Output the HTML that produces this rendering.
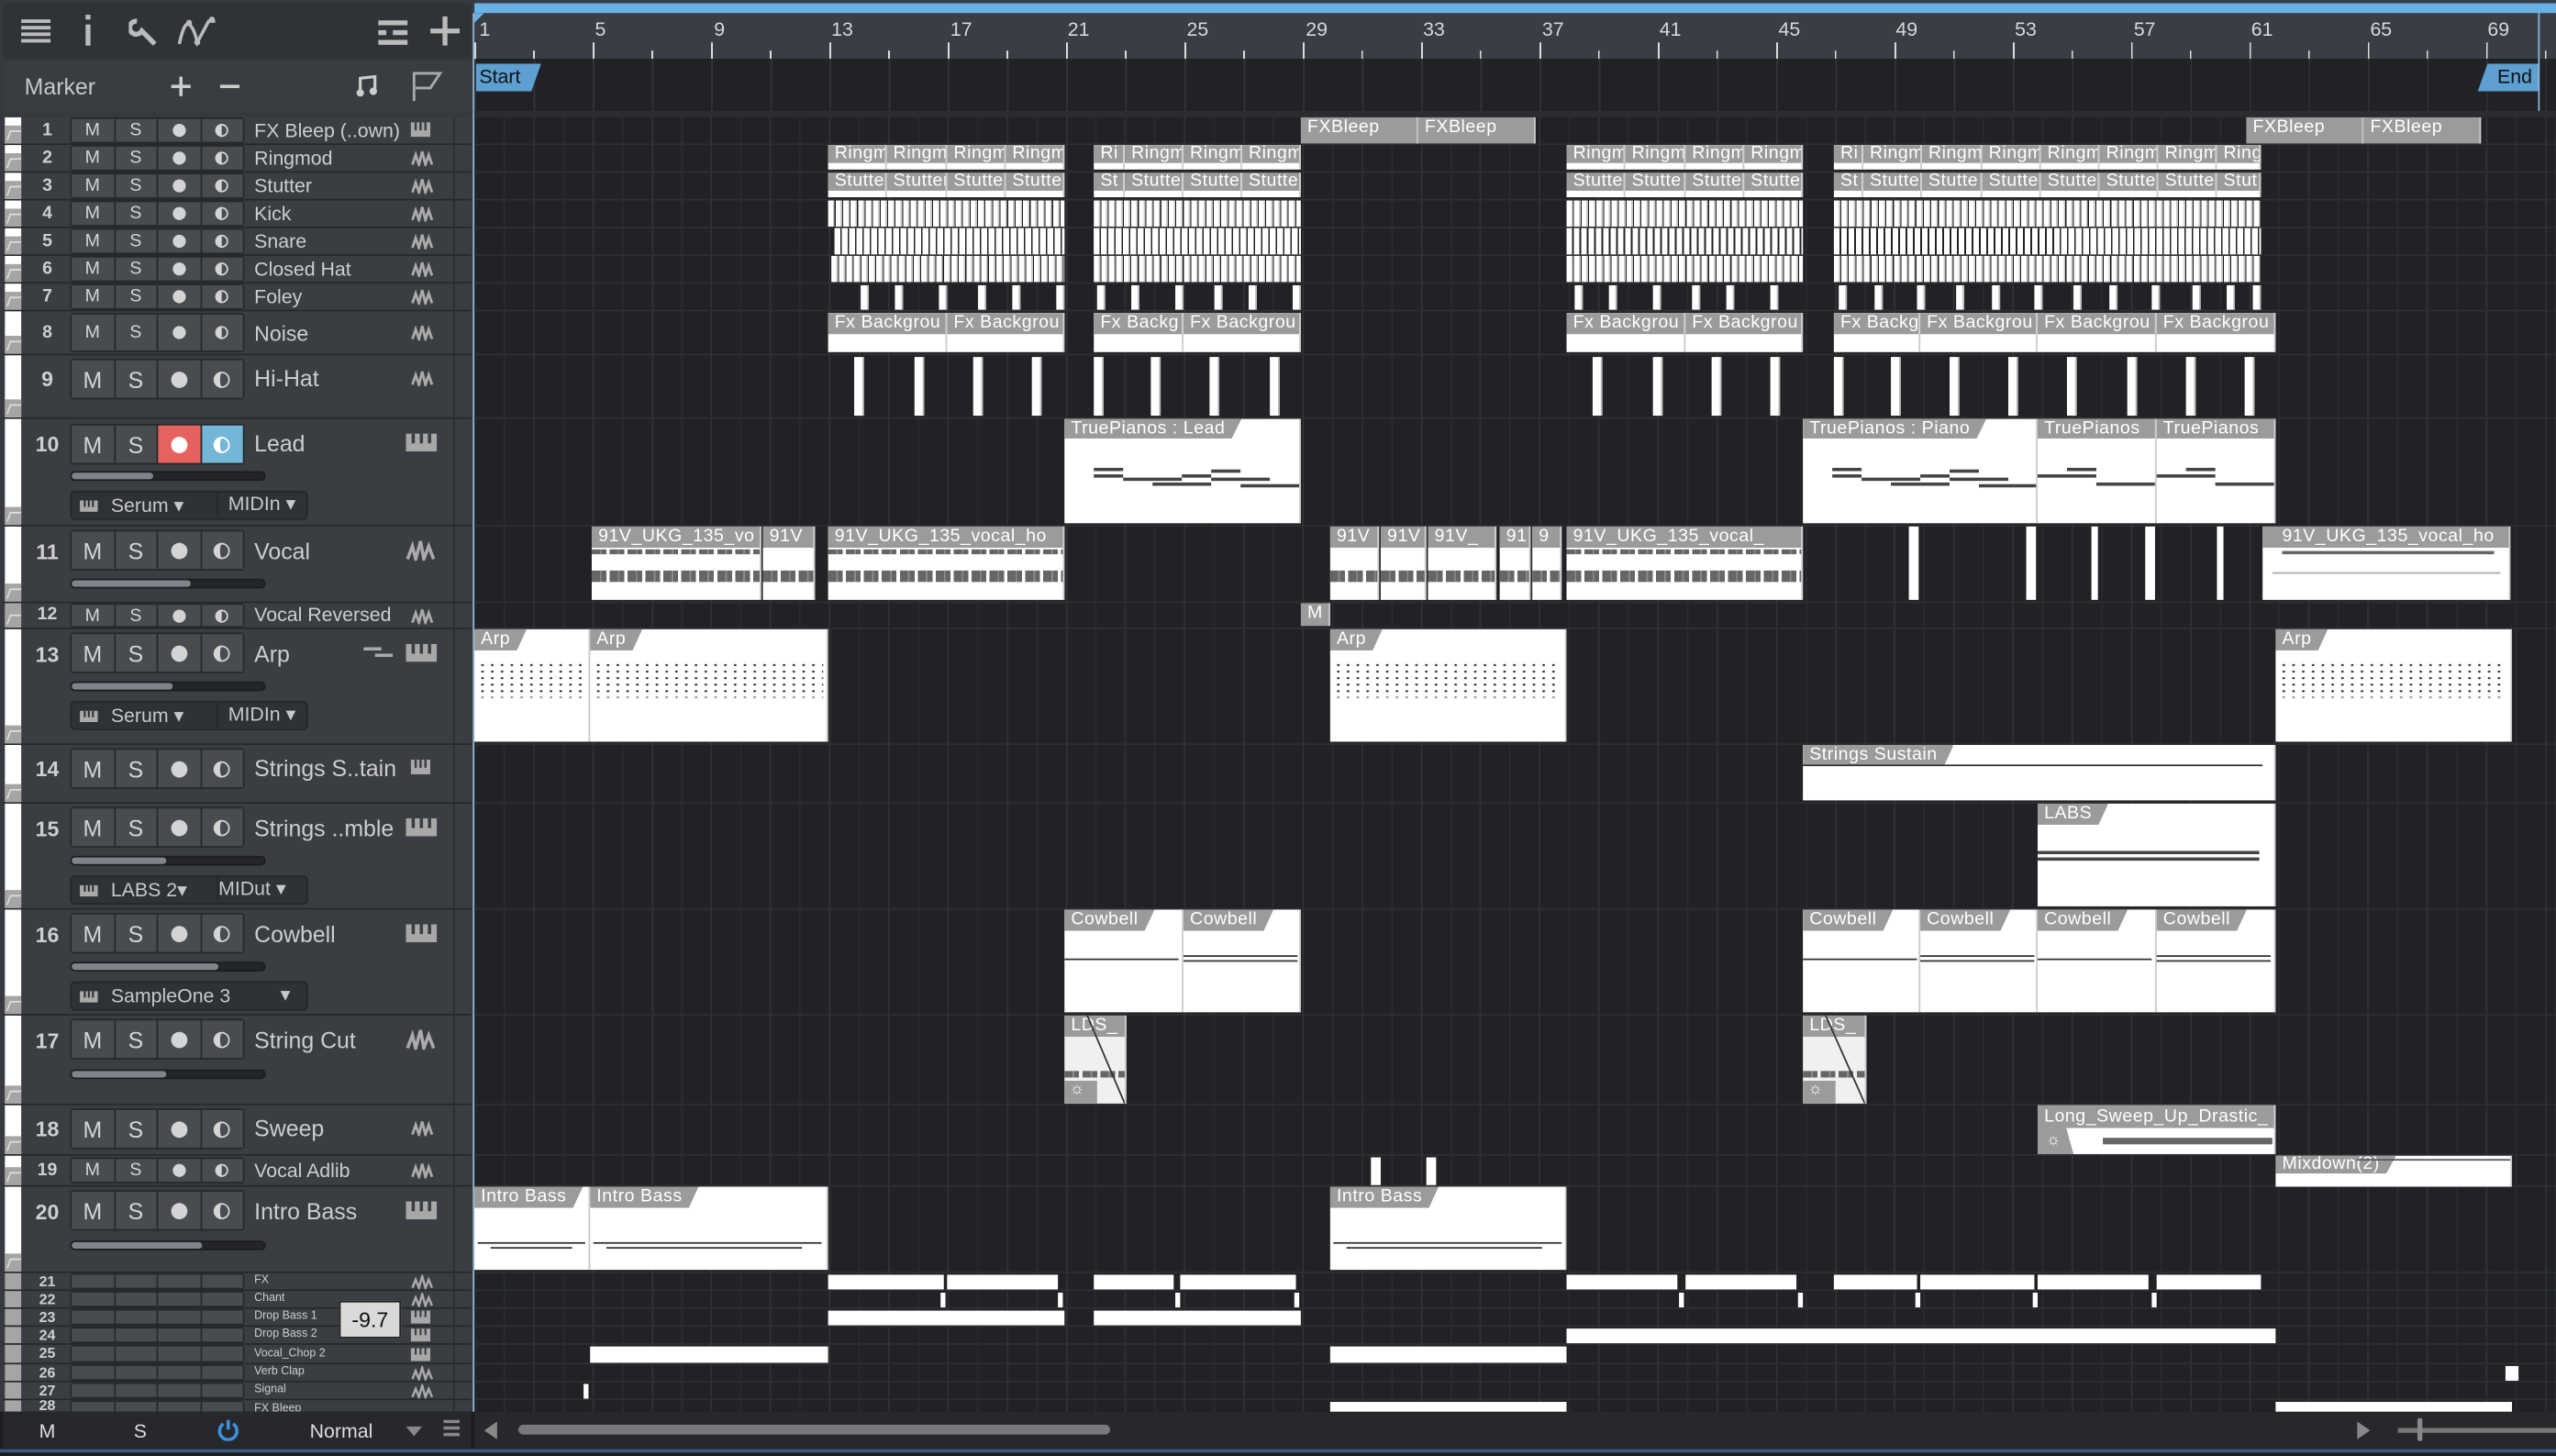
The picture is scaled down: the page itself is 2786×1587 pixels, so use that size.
<!DOCTYPE html>
<html><head><meta charset="utf-8"><style>
*{box-sizing:border-box;margin:0;padding:0}
body{width:2786px;height:1586px;overflow:hidden;background:#1c1d20;font-family:"Liberation Sans",sans-serif}
#w{position:absolute;left:0;top:0;width:1568px;height:893px;transform:scale(1.776786);transform-origin:0 0;background:#1c1d20;overflow:hidden}
.a{position:absolute}
#lp{left:0;top:0;width:291px;height:893px;background:#36393e}
#tb{left:2px;top:2px;width:287px;height:34px;background:#2f3236}
#mk{left:2px;top:38px;width:287px;height:31px;background:#393c41;color:#c8c8c8;font-size:14px}
.tr{position:absolute;left:2px;width:287px;background:#3a3d42;border-bottom:1px solid #26282b}
.au{position:absolute;left:1px;top:0;width:10px;height:100%;background:#fff}
.au i{position:absolute;left:0;bottom:0;width:10px;height:11px;background:#a5a5a5}
.au i:after{content:"";position:absolute;left:2px;top:3px;width:6px;height:5px;border-left:1px solid #ddd;border-top:1px solid #ddd;transform:skewX(-20deg)}
.n{position:absolute;left:14px;width:26px;text-align:center;color:#cfcfcf;font-weight:bold;font-size:11px}
.bt{position:absolute;left:41px;width:107px;display:flex;border:1px solid #26282b;border-radius:2px;background:#26282b}
.bt b{flex:1;background:#484b50;color:#d4d4d4;font-weight:normal;text-align:center;margin-right:1px;font-size:11px;display:flex;align-items:center;justify-content:center}
.bt b:last-child{margin-right:0}
.dot{width:8px;height:8px;border-radius:50%;background:#d4d4d4;display:block}
.mon{width:8px;height:8px;border-radius:50%;border:1.5px solid #d4d4d4;border-left:4px solid #d4d4d4;display:block}
.nm{position:absolute;left:154px;color:#cdcdcd;font-size:12px;white-space:nowrap}
.ic{position:absolute;left:250px}
.sep{position:absolute;left:276px;top:0;width:1px;height:100%;background:#2a2c2f}
.sl{position:absolute;left:41px;width:120px;height:6px;border-radius:3px;background:#232528;border:1px solid #1c1d20}
.sl i{position:absolute;left:0;top:0;height:100%;background:#80848a;border-radius:3px}
.sel{position:absolute;left:41px;width:146px;height:18px;background:#2e3135;border:1px solid #25272a;border-radius:3px;color:#c8c8c8;font-size:12px;line-height:16px}
#ar{left:291px;top:72px;width:1277px;height:794px;background-color:#202225;
background-image:repeating-linear-gradient(90deg,#303236 0 1px,transparent 1px 36.3px),repeating-linear-gradient(90deg,transparent 0 18.15px,#292b2e 18.15px 19.15px,transparent 19.15px 36.3px);background-position:-0.3px 0}
.hl{position:absolute;left:291px;width:1277px;height:1px;background:#2d2f32}
.c{position:absolute;background:#fff;overflow:hidden;border-right:1px solid #ccc}
.h{background:#9b9b9b;color:#fff;font-size:11px;height:13px;line-height:13px;padding-left:4px;white-space:nowrap;overflow:hidden;letter-spacing:.3px}
.t{display:inline-block;padding-right:10px;clip-path:polygon(0 0,100% 0,calc(100% - 6px) 100%,0 100%)}
.hh{background:transparent;padding:0}
.hh span{background:#9b9b9b;padding:0 10px 0 4px;display:inline-block;clip-path:polygon(0 0,100% 0,calc(100% - 6px) 100%,0 100%)}
.k{background:repeating-linear-gradient(90deg,#fff 0 3px,#c9c9c9 3px 4px,#1a1a1a 4px 4.6px)}
.sn{background:repeating-linear-gradient(90deg,#fff 0 3.5px,#222 3.5px 4.5px),#fff}
.fb{position:absolute;width:5px;background:#fff;border-right:1px solid #bbb}
.wv{position:absolute;left:0;right:0;height:7px;background:repeating-linear-gradient(90deg,#666 0 5px,#8a8a8a 5px 6px,#666 6px 9px,transparent 9px 11px)}
.dots{position:absolute;left:2px;right:2px;background-image:radial-gradient(#333 0.8px,transparent 1px);background-size:6px 4px}
.ml{position:absolute;height:2px;background:#444}
.rl{position:absolute;color:#d8d8d8;font-size:12px;top:11px}
.tk{position:absolute;width:1px;background:#ddd}
.wb{position:absolute;background:#fff}
</style></head><body><div id="w">

<!-- LEFT PANEL -->
<div id="lp" class="a"></div>
<div id="tb" class="a">
 <svg class="a" style="left:10px;top:9px" width="20" height="16"><path d="M1 2h18M1 6h18M1 10h18M1 14h18" stroke="#bbb" stroke-width="2.2"/></svg>
 <svg class="a" style="left:48px;top:7px" width="8" height="20"><rect x="2.5" y="0" width="3" height="3" fill="#bbb"/><rect x="2.5" y="6" width="3" height="13" fill="#bbb"/></svg>
 <svg class="a" style="left:77px;top:8px" width="20" height="20"><path d="M5 3a4 4 0 1 0 3 6l8 8" stroke="#bbb" stroke-width="3" fill="none"/></svg>
 <svg class="a" style="left:106px;top:7px" width="28" height="20"><path d="M2 18Q5 4 8 6T13 17L20 4 24 4" stroke="#bbb" stroke-width="2" fill="none"/><circle cx="8" cy="5" r="1.8" fill="#bbb"/><circle cx="13" cy="17" r="1.8" fill="#bbb"/><circle cx="22" cy="3" r="1.8" fill="#bbb"/></svg>
 <svg class="a" style="left:230px;top:10px" width="20" height="16"><path d="M0 2h18M0 8h5M9 8h9M0 14h18" stroke="#bbb" stroke-width="3"/></svg>
 <svg class="a" style="left:262px;top:8px" width="18" height="18"><path d="M9 0v18M0 9h18" stroke="#bbb" stroke-width="3"/></svg>
</div>
<div id="mk" class="a">
 <span class="a" style="left:13px;top:7px">Marker</span>
 <svg class="a" style="left:103px;top:9px" width="12" height="12"><path d="M6 0v12M0 6h12" stroke="#ccc" stroke-width="2"/></svg>
 <svg class="a" style="left:133px;top:9px" width="12" height="12"><path d="M0 6h12" stroke="#ccc" stroke-width="2"/></svg>
 <svg class="a" style="left:216px;top:8px" width="14" height="14"><path d="M3 11V2l9-1v9" stroke="#ccc" stroke-width="1.8" fill="none"/><circle cx="3" cy="11" r="2.3" fill="#ccc"/><circle cx="11" cy="10" r="2.3" fill="#ccc"/></svg>
 <svg class="a" style="left:250px;top:5px" width="20" height="20"><path d="M2 19V2h16l-6 9H3" stroke="#aaa" stroke-width="1.6" fill="none"/></svg>
</div>

<!-- track headers -->
<div class="tr" style="top:72px;height:17px"><div class="au"><i></i></div><div class="n" style="top:2px">1</div><div class="bt" style="top:0;height:16px"><b>M</b><b>S</b><b><i class="dot"></i></b><b><i class="mon"></i></b></div><div class="nm" style="top:1px">FX Bleep (..own)</div><svg class="ic" style="top:3px" width="12" height="9"><rect width="12" height="9" fill="#a8a8a8"/><path d="M3 0v5M6 0v5M9 0v5" stroke="#3a3d42" stroke-width="1.4"/></svg><div class="sep"></div></div>
<div class="tr" style="top:89px;height:17px"><div class="au"><i></i></div><div class="n" style="top:2px">2</div><div class="bt" style="top:0;height:16px"><b>M</b><b>S</b><b><i class="dot"></i></b><b><i class="mon"></i></b></div><div class="nm" style="top:1px">Ringmod</div><svg class="ic" style="top:3px" width="14" height="10"><path d="M1 9L3 3 5 9 7 1 9 9 11 3 13 9" stroke="#aaa" stroke-width="1.6" fill="none"/></svg><div class="sep"></div></div>
<div class="tr" style="top:106px;height:17px"><div class="au"><i></i></div><div class="n" style="top:2px">3</div><div class="bt" style="top:0;height:16px"><b>M</b><b>S</b><b><i class="dot"></i></b><b><i class="mon"></i></b></div><div class="nm" style="top:1px">Stutter</div><svg class="ic" style="top:3px" width="14" height="10"><path d="M1 9L3 3 5 9 7 1 9 9 11 3 13 9" stroke="#aaa" stroke-width="1.6" fill="none"/></svg><div class="sep"></div></div>
<div class="tr" style="top:123px;height:17px"><div class="au"><i></i></div><div class="n" style="top:2px">4</div><div class="bt" style="top:0;height:16px"><b>M</b><b>S</b><b><i class="dot"></i></b><b><i class="mon"></i></b></div><div class="nm" style="top:1px">Kick</div><svg class="ic" style="top:3px" width="14" height="10"><path d="M1 9L3 3 5 9 7 1 9 9 11 3 13 9" stroke="#aaa" stroke-width="1.6" fill="none"/></svg><div class="sep"></div></div>
<div class="tr" style="top:140px;height:17px"><div class="au"><i></i></div><div class="n" style="top:2px">5</div><div class="bt" style="top:0;height:16px"><b>M</b><b>S</b><b><i class="dot"></i></b><b><i class="mon"></i></b></div><div class="nm" style="top:1px">Snare</div><svg class="ic" style="top:3px" width="14" height="10"><path d="M1 9L3 3 5 9 7 1 9 9 11 3 13 9" stroke="#aaa" stroke-width="1.6" fill="none"/></svg><div class="sep"></div></div>
<div class="tr" style="top:157px;height:17px"><div class="au"><i></i></div><div class="n" style="top:2px">6</div><div class="bt" style="top:0;height:16px"><b>M</b><b>S</b><b><i class="dot"></i></b><b><i class="mon"></i></b></div><div class="nm" style="top:1px">Closed Hat</div><svg class="ic" style="top:3px" width="14" height="10"><path d="M1 9L3 3 5 9 7 1 9 9 11 3 13 9" stroke="#aaa" stroke-width="1.6" fill="none"/></svg><div class="sep"></div></div>
<div class="tr" style="top:174px;height:17px"><div class="au"><i></i></div><div class="n" style="top:2px">7</div><div class="bt" style="top:0;height:16px"><b>M</b><b>S</b><b><i class="dot"></i></b><b><i class="mon"></i></b></div><div class="nm" style="top:1px">Foley</div><svg class="ic" style="top:3px" width="14" height="10"><path d="M1 9L3 3 5 9 7 1 9 9 11 3 13 9" stroke="#aaa" stroke-width="1.6" fill="none"/></svg><div class="sep"></div></div>
<div class="tr" style="top:191px;height:27px"><div class="au"><i></i></div><div class="n" style="top:7px">8</div><div class="bt" style="top:1px;height:24px"><b>M</b><b>S</b><b><i class="dot"></i></b><b><i class="mon"></i></b></div><div class="nm" style="top:6px;font-size:13px">Noise</div><svg class="ic" style="top:8px" width="14" height="10"><path d="M1 9L3 3 5 9 7 1 9 9 11 3 13 9" stroke="#aaa" stroke-width="1.6" fill="none"/></svg><div class="sep"></div></div>
<div class="tr" style="top:218px;height:39px"><div class="au"><i></i></div><div class="n" style="top:7px;font-size:13px">9</div><div class="bt" style="top:2px;height:25px"><b style="font-size:14px">M</b><b style="font-size:14px">S</b><b><i class="dot" style="width:10px;height:10px"></i></b><b><i class="mon" style="width:10px;height:10px"></i></b></div><div class="nm" style="top:6px;font-size:14px">Hi-Hat</div><svg class="ic" style="top:9px" width="14" height="10"><path d="M1 9L3 3 5 9 7 1 9 9 11 3 13 9" stroke="#aaa" stroke-width="1.6" fill="none"/></svg><div class="sep"></div></div>
<div class="tr" style="top:257px;height:66px"><div class="au"><i></i></div><div class="n" style="top:8px;font-size:13px">10</div><div class="bt" style="top:3px;height:25px"><b style="font-size:14px">M</b><b style="font-size:14px">S</b><b style="background:#e6625e"><i class="dot" style="width:10px;height:10px;background:#fff"></i></b><b style="background:#74b6d6"><i class="mon" style="width:10px;height:10px;border-color:#fff"></i></b></div><div class="nm" style="top:7px;font-size:14px">Lead</div><svg class="ic" style="top:9px;left:247px" width="19" height="11"><rect width="19" height="11" fill="#a8a8a8"/><path d="M4.5 0v6M9.5 0v6M14.5 0v6" stroke="#3a3d42" stroke-width="2"/></svg><div class="sl" style="top:32px"><i style="width:50px"></i></div><div class="sel" style="top:44px"><svg class="a" style="left:5px;top:5px" width="11" height="7"><rect width="11" height="7" fill="#aaa"/><path d="M3 0v4M5.5 0v4M8 0v4" stroke="#2e3135" stroke-width="1.2"/></svg><span class="a" style="left:24px">Serum ▾</span><span class="a" style="left:89px;border-left:1px solid #25272a;padding-left:6px;top:-1px">MIDIn ▾</span></div><div class="sep"></div></div>
<div class="tr" style="top:323px;height:47px"><div class="au"><i></i></div><div class="n" style="top:8px;font-size:13px">11</div><div class="bt" style="top:2px;height:25px"><b style="font-size:14px">M</b><b style="font-size:14px">S</b><b><i class="dot" style="width:10px;height:10px"></i></b><b><i class="mon" style="width:10px;height:10px"></i></b></div><div class="nm" style="top:7px;font-size:14px">Vocal</div><svg class="ic" style="top:8px;left:247px" width="18" height="13"><path d="M1 12L4 4 6 12 9 1 11 12 14 4 17 12" stroke="#aaa" stroke-width="2" fill="none"/></svg><div class="sl" style="top:32px"><i style="width:73px"></i></div><div class="sep"></div></div>
<div class="tr" style="top:370px;height:16px"><div class="au" style="background:#a5a5a5"><i></i></div><div class="n" style="top:1px">12</div><div class="bt" style="top:0;height:15px"><b>M</b><b>S</b><b><i class="dot"></i></b><b><i class="mon"></i></b></div><div class="nm" style="top:0">Vocal Reversed</div><svg class="ic" style="top:3px" width="14" height="10"><path d="M1 9L3 3 5 9 7 1 9 9 11 3 13 9" stroke="#aaa" stroke-width="1.6" fill="none"/></svg><div class="sep"></div></div>
<div class="tr" style="top:386px;height:71px"><div class="au"><i></i></div><div class="n" style="top:8px;font-size:13px">13</div><div class="bt" style="top:2px;height:25px"><b style="font-size:14px">M</b><b style="font-size:14px">S</b><b><i class="dot" style="width:10px;height:10px"></i></b><b><i class="mon" style="width:10px;height:10px"></i></b></div><div class="nm" style="top:7px;font-size:14px">Arp</div><svg class="a" style="left:221px;top:11px" width="18" height="7"><path d="M0 1h11M7 5h11" stroke="#aaa" stroke-width="2"/></svg><svg class="ic" style="top:9px;left:247px" width="19" height="11"><rect width="19" height="11" fill="#a8a8a8"/><path d="M4.5 0v6M9.5 0v6M14.5 0v6" stroke="#3a3d42" stroke-width="2"/></svg><div class="sl" style="top:32px"><i style="width:62px"></i></div><div class="sel" style="top:44px"><svg class="a" style="left:5px;top:5px" width="11" height="7"><rect width="11" height="7" fill="#aaa"/><path d="M3 0v4M5.5 0v4M8 0v4" stroke="#2e3135" stroke-width="1.2"/></svg><span class="a" style="left:24px">Serum ▾</span><span class="a" style="left:89px;border-left:1px solid #25272a;padding-left:6px;top:-1px">MIDIn ▾</span></div><div class="sep"></div></div>
<div class="tr" style="top:457px;height:36px"><div class="au"><i></i></div><div class="n" style="top:7px;font-size:13px">14</div><div class="bt" style="top:2px;height:25px"><b style="font-size:14px">M</b><b style="font-size:14px">S</b><b><i class="dot" style="width:10px;height:10px"></i></b><b><i class="mon" style="width:10px;height:10px"></i></b></div><div class="nm" style="top:6px;font-size:14px">Strings S..tain</div><svg class="ic" style="top:9px" width="12" height="9"><rect width="12" height="9" fill="#a8a8a8"/><path d="M3 0v5M6 0v5M9 0v5" stroke="#3a3d42" stroke-width="1.4"/></svg><div class="sep"></div></div>
<div class="tr" style="top:493px;height:65px"><div class="au"><i></i></div><div class="n" style="top:8px;font-size:13px">15</div><div class="bt" style="top:2px;height:25px"><b style="font-size:14px">M</b><b style="font-size:14px">S</b><b><i class="dot" style="width:10px;height:10px"></i></b><b><i class="mon" style="width:10px;height:10px"></i></b></div><div class="nm" style="top:7px;font-size:14px">Strings ..mble</div><svg class="ic" style="top:9px;left:247px" width="19" height="11"><rect width="19" height="11" fill="#a8a8a8"/><path d="M4.5 0v6M9.5 0v6M14.5 0v6" stroke="#3a3d42" stroke-width="2"/></svg><div class="sl" style="top:32px"><i style="width:58px"></i></div><div class="sel" style="top:44px"><svg class="a" style="left:5px;top:5px" width="11" height="7"><rect width="11" height="7" fill="#aaa"/><path d="M3 0v4M5.5 0v4M8 0v4" stroke="#2e3135" stroke-width="1.2"/></svg><span class="a" style="left:24px">LABS 2▾</span><span class="a" style="left:89px;border-left:1px solid #25272a;padding-left:0;top:-1px">MIDut ▾</span></div><div class="sep"></div></div>
<div class="tr" style="top:558px;height:65px"><div class="au"><i></i></div><div class="n" style="top:8px;font-size:13px">16</div><div class="bt" style="top:2px;height:25px"><b style="font-size:14px">M</b><b style="font-size:14px">S</b><b><i class="dot" style="width:10px;height:10px"></i></b><b><i class="mon" style="width:10px;height:10px"></i></b></div><div class="nm" style="top:7px;font-size:14px">Cowbell</div><svg class="ic" style="top:9px;left:247px" width="19" height="11"><rect width="19" height="11" fill="#a8a8a8"/><path d="M4.5 0v6M9.5 0v6M14.5 0v6" stroke="#3a3d42" stroke-width="2"/></svg><div class="sl" style="top:32px"><i style="width:90px"></i></div><div class="sel" style="top:44px"><svg class="a" style="left:5px;top:5px" width="11" height="7"><rect width="11" height="7" fill="#aaa"/><path d="M3 0v4M5.5 0v4M8 0v4" stroke="#2e3135" stroke-width="1.2"/></svg><span class="a" style="left:24px">SampleOne 3</span><span class="a" style="left:128px;top:-1px">▾</span></div><div class="sep"></div></div>
<div class="tr" style="top:623px;height:55px"><div class="au"><i></i></div><div class="n" style="top:8px;font-size:13px">17</div><div class="bt" style="top:2px;height:25px"><b style="font-size:14px">M</b><b style="font-size:14px">S</b><b><i class="dot" style="width:10px;height:10px"></i></b><b><i class="mon" style="width:10px;height:10px"></i></b></div><div class="nm" style="top:7px;font-size:14px">String Cut</div><svg class="ic" style="top:8px;left:247px" width="18" height="13"><path d="M1 12L4 4 6 12 9 1 11 12 14 4 17 12" stroke="#aaa" stroke-width="2" fill="none"/></svg><div class="sl" style="top:33px"><i style="width:58px"></i></div><div class="sep"></div></div>
<div class="tr" style="top:678px;height:31px"><div class="au"><i></i></div><div class="n" style="top:7px;font-size:13px">18</div><div class="bt" style="top:2px;height:25px"><b style="font-size:14px">M</b><b style="font-size:14px">S</b><b><i class="dot" style="width:10px;height:10px"></i></b><b><i class="mon" style="width:10px;height:10px"></i></b></div><div class="nm" style="top:6px;font-size:14px">Sweep</div><svg class="ic" style="top:9px" width="14" height="10"><path d="M1 9L3 3 5 9 7 1 9 9 11 3 13 9" stroke="#aaa" stroke-width="1.6" fill="none"/></svg><div class="sep"></div></div>
<div class="tr" style="top:709px;height:19px"><div class="au"><i></i></div><div class="n" style="top:3px">19</div><div class="bt" style="top:1px;height:16px"><b>M</b><b>S</b><b><i class="dot"></i></b><b><i class="mon"></i></b></div><div class="nm" style="top:2px">Vocal Adlib</div><svg class="ic" style="top:4px" width="14" height="10"><path d="M1 9L3 3 5 9 7 1 9 9 11 3 13 9" stroke="#aaa" stroke-width="1.6" fill="none"/></svg><div class="sep"></div></div>
<div class="tr" style="top:728px;height:53px"><div class="au"><i></i></div><div class="n" style="top:8px;font-size:13px">20</div><div class="bt" style="top:2px;height:25px"><b style="font-size:14px">M</b><b style="font-size:14px">S</b><b><i class="dot" style="width:10px;height:10px"></i></b><b><i class="mon" style="width:10px;height:10px"></i></b></div><div class="nm" style="top:7px;font-size:14px">Intro Bass</div><svg class="ic" style="top:9px;left:247px" width="19" height="11"><rect width="19" height="11" fill="#a8a8a8"/><path d="M4.5 0v6M9.5 0v6M14.5 0v6" stroke="#3a3d42" stroke-width="2"/></svg><div class="sl" style="top:33px"><i style="width:80px"></i></div><div class="sep"></div></div>

<div class="tr" style="top:781px;height:11px"><div class="au" style="background:#a5a5a5"></div><div class="n" style="top:0;font-size:9px">21</div><div class="bt" style="top:0;height:10px"><b></b><b></b><b></b><b></b></div><div class="nm" style="top:1px;font-size:7px">FX</div><svg class="ic" style="top:1px" width="14" height="9"><path d="M1 8L3 3 5 8 7 1 9 8 11 3 13 8" stroke="#aaa" stroke-width="1.4" fill="none"/></svg><div class="sep"></div></div>
<div class="tr" style="top:792px;height:11px"><div class="au" style="background:#a5a5a5"></div><div class="n" style="top:0;font-size:9px">22</div><div class="bt" style="top:0;height:10px"><b></b><b></b><b></b><b></b></div><div class="nm" style="top:1px;font-size:7px">Chant</div><svg class="ic" style="top:1px" width="14" height="9"><path d="M1 8L3 3 5 8 7 1 9 8 11 3 13 8" stroke="#aaa" stroke-width="1.4" fill="none"/></svg><div class="sep"></div></div>
<div class="tr" style="top:803px;height:11px"><div class="au" style="background:#a5a5a5"></div><div class="n" style="top:0;font-size:9px">23</div><div class="bt" style="top:0;height:10px"><b></b><b></b><b></b><b></b></div><div class="nm" style="top:1px;font-size:7px">Drop Bass 1</div><svg class="ic" style="top:1px" width="12" height="8"><rect width="12" height="8" fill="#a8a8a8"/><path d="M3 0v4M6 0v4M9 0v4" stroke="#3a3d42" stroke-width="1.2"/></svg><div class="sep"></div></div>
<div class="tr" style="top:814px;height:11px"><div class="au" style="background:#a5a5a5"></div><div class="n" style="top:0;font-size:9px">24</div><div class="bt" style="top:0;height:10px"><b></b><b></b><b></b><b></b></div><div class="nm" style="top:1px;font-size:7px">Drop Bass 2</div><svg class="ic" style="top:1px" width="12" height="8"><rect width="12" height="8" fill="#a8a8a8"/><path d="M3 0v4M6 0v4M9 0v4" stroke="#3a3d42" stroke-width="1.2"/></svg><div class="sep"></div></div>
<div class="tr" style="top:825px;height:12px"><div class="au" style="background:#a5a5a5"></div><div class="n" style="top:0;font-size:9px">25</div><div class="bt" style="top:0;height:11px"><b></b><b></b><b></b><b></b></div><div class="nm" style="top:2px;font-size:7px">Vocal_Chop 2</div><svg class="ic" style="top:2px" width="12" height="8"><rect width="12" height="8" fill="#a8a8a8"/><path d="M3 0v4M6 0v4M9 0v4" stroke="#3a3d42" stroke-width="1.2"/></svg><div class="sep"></div></div>
<div class="tr" style="top:837px;height:11px"><div class="au" style="background:#a5a5a5"></div><div class="n" style="top:0;font-size:9px">26</div><div class="bt" style="top:0;height:10px"><b></b><b></b><b></b><b></b></div><div class="nm" style="top:1px;font-size:7px">Verb Clap</div><svg class="ic" style="top:1px" width="14" height="9"><path d="M1 8L3 3 5 8 7 1 9 8 11 3 13 8" stroke="#aaa" stroke-width="1.4" fill="none"/></svg><div class="sep"></div></div>
<div class="tr" style="top:848px;height:11px"><div class="au" style="background:#a5a5a5"></div><div class="n" style="top:0;font-size:9px">27</div><div class="bt" style="top:0;height:10px"><b></b><b></b><b></b><b></b></div><div class="nm" style="top:1px;font-size:7px">Signal</div><svg class="ic" style="top:1px" width="14" height="9"><path d="M1 8L3 3 5 8 7 1 9 8 11 3 13 8" stroke="#aaa" stroke-width="1.4" fill="none"/></svg><div class="sep"></div></div>
<div class="tr" style="top:859px;height:8px;overflow:hidden"><div class="au" style="background:#a5a5a5"></div><div class="n" style="top:-2px;font-size:9px">28</div><div class="bt" style="top:0;height:10px"><b></b><b></b><b></b><b></b></div><div class="nm" style="top:2px;font-size:7px">FX Bleep</div><div class="sep"></div></div>
<div class="a" style="left:208px;top:798px;width:38px;height:23px;background:#d9d9d9;border:1px solid #222;color:#111;font-size:13px;text-align:center;line-height:21px">-9.7</div>

<!-- bottom bar -->
<div class="a" style="left:0;top:866px;width:1568px;height:27px;background:#1c1d20"></div>
<div class="a" style="left:2px;top:866px;width:287px;height:23px;background:#26282b;color:#ddd;font-size:12px">
 <span class="a" style="left:22px;top:5px">M</span><span class="a" style="left:80px;top:5px">S</span>
 <svg class="a" style="left:131px;top:4px" width="14" height="14"><path d="M4 3.5A5.3 5.3 0 1 0 10 3.5" stroke="#3d8fe0" stroke-width="2" fill="none"/><path d="M7 1v6" stroke="#3d8fe0" stroke-width="2"/></svg>
 <span class="a" style="left:188px;top:5px">Normal</span>
 <svg class="a" style="left:247px;top:9px" width="10" height="6"><path d="M0 0h10L5 6z" fill="#888"/></svg>
 <svg class="a" style="left:270px;top:5px" width="10" height="11"><path d="M0 1h10M0 5h10M0 9h10" stroke="#888" stroke-width="2"/></svg>
</div>
<div class="a" style="left:291px;top:866px;width:1277px;height:23px;background:#26282b">
 <svg class="a" style="left:6px;top:6px" width="8" height="11"><path d="M8 0v11L0 5.5z" fill="#888"/></svg>
 <div class="a" style="left:27px;top:8px;width:363px;height:6px;border-radius:3px;background:#77797d"></div>
 <svg class="a" style="left:1155px;top:6px" width="8" height="11"><path d="M0 0v11L8 5.5z" fill="#888"/></svg>
 <div class="a" style="left:1180px;top:10px;width:97px;height:3px;background:#777"></div>
 <div class="a" style="left:1192px;top:4px;width:3px;height:14px;background:#888;border-radius:1px"></div>
</div>
<div class="a" style="left:0;top:889px;width:1568px;height:2px;background:#3c5a80"></div>

<!-- RULER -->
<div class="a" style="left:291px;top:0;width:1277px;height:38px;background:#383d46"></div>
<div class="a" style="left:291px;top:2px;width:1277px;height:6px;background:#6ab2e6"></div>
<div class="a" style="left:291px;top:8px;width:6px;height:6px;background:#6ab2e6;clip-path:polygon(0 0,100% 0,0 100%)"></div>
<div class="a" style="left:291px;top:36px;width:1277px;height:34px;background:#202225;background-image:repeating-linear-gradient(90deg,#303236 0 1px,transparent 1px 36.3px)"></div>
<div class="a" style="left:291px;top:68px;width:1277px;height:4px;background:#2a2c30"></div>
<div class="a" style="left:291px;top:26px;width:1277px;height:10px;background-image:repeating-linear-gradient(90deg,#dcdcdc 0 1px,transparent 1px 72.6px)"></div>
<div class="a" style="left:327px;top:31px;width:1240px;height:5px;background-image:repeating-linear-gradient(90deg,#dcdcdc 0 1px,transparent 1px 72.6px)"></div>
<span class="rl" style="left:294px">1</span><span class="rl" style="left:365px">5</span><span class="rl" style="left:438px">9</span><span class="rl" style="left:510px">13</span><span class="rl" style="left:583px">17</span><span class="rl" style="left:655px">21</span><span class="rl" style="left:728px">25</span><span class="rl" style="left:801px">29</span><span class="rl" style="left:873px">33</span><span class="rl" style="left:946px">37</span><span class="rl" style="left:1018px">41</span><span class="rl" style="left:1091px">45</span><span class="rl" style="left:1163px">49</span><span class="rl" style="left:1236px">53</span><span class="rl" style="left:1309px">57</span><span class="rl" style="left:1381px">61</span><span class="rl" style="left:1454px">65</span><span class="rl" style="left:1526px">69</span>
<div class="a" style="left:292px;top:39px;width:40px;height:17px;background:#5d9fd0;clip-path:polygon(0 0,100% 0,calc(100% - 6px) 100%,0 100%);color:#111;font-size:12px;line-height:17px;padding-left:2px">Start</div>
<div class="a" style="left:1520px;top:39px;width:38px;height:17px;background:#5d9fd0;clip-path:polygon(6px 0,100% 0,100% 100%,0 100%);color:#111;font-size:12px;line-height:17px;padding-left:12px">End</div>
<div class="a" style="left:290px;top:8px;width:1px;height:858px;background:#8fb6d4"></div>
<div class="a" style="left:1557px;top:8px;width:1px;height:60px;background:#8fb6d4"></div>

<!-- ARRANGE -->
<div id="ar" class="a"></div>
<div class="hl" style="top:88px"></div><div class="hl" style="top:105px"></div><div class="hl" style="top:122px"></div><div class="hl" style="top:139px"></div><div class="hl" style="top:156px"></div><div class="hl" style="top:173px"></div><div class="hl" style="top:190px"></div><div class="hl" style="top:217px"></div><div class="hl" style="top:256px"></div><div class="hl" style="top:322px"></div><div class="hl" style="top:369px"></div><div class="hl" style="top:385px"></div><div class="hl" style="top:456px"></div><div class="hl" style="top:492px"></div><div class="hl" style="top:557px"></div><div class="hl" style="top:622px"></div><div class="hl" style="top:677px"></div><div class="hl" style="top:708px"></div><div class="hl" style="top:727px"></div><div class="hl" style="top:780px"></div><div class="hl" style="top:791px"></div><div class="hl" style="top:802px"></div><div class="hl" style="top:813px"></div><div class="hl" style="top:824px"></div><div class="hl" style="top:836px"></div><div class="hl" style="top:847px"></div><div class="hl" style="top:858px"></div>

<!-- row1 FXBleep -->
<div class="c" style="left:798px;top:72px;width:72px;height:16px;background:#9b9b9b"><div class="h" style="height:12px;line-height:12px">FXBleep</div></div>
<div class="c" style="left:870px;top:72px;width:72px;height:16px;background:#9b9b9b"><div class="h" style="height:12px;line-height:12px">FXBleep</div></div>
<div class="c" style="left:1378px;top:72px;width:72px;height:16px;background:#9b9b9b"><div class="h" style="height:12px;line-height:12px">FXBleep</div></div>
<div class="c" style="left:1450px;top:72px;width:72px;height:16px;background:#9b9b9b"><div class="h" style="height:12px;line-height:12px">FXBleep</div></div>

<!-- row2 Ringmod / row3 Stutter -->
<div class="c" style="left:508px;top:89px;width:36px;height:15px"><div class="h" style="height:11px;line-height:11px">Ringm</div></div><div class="c" style="left:544px;top:89px;width:37px;height:15px"><div class="h" style="height:11px;line-height:11px">Ringm</div></div><div class="c" style="left:581px;top:89px;width:36px;height:15px"><div class="h" style="height:11px;line-height:11px">Ringm</div></div><div class="c" style="left:617px;top:89px;width:36px;height:15px"><div class="h" style="height:11px;line-height:11px">Ringm</div></div>
<div class="c" style="left:671px;top:89px;width:19px;height:15px"><div class="h" style="height:11px;line-height:11px">Ri</div></div><div class="c" style="left:690px;top:89px;width:36px;height:15px"><div class="h" style="height:11px;line-height:11px">Ringm</div></div><div class="c" style="left:726px;top:89px;width:36px;height:15px"><div class="h" style="height:11px;line-height:11px">Ringm</div></div><div class="c" style="left:762px;top:89px;width:36px;height:15px"><div class="h" style="height:11px;line-height:11px">Ringm</div></div>
<div class="c" style="left:961px;top:89px;width:36px;height:15px"><div class="h" style="height:11px;line-height:11px">Ringm</div></div><div class="c" style="left:997px;top:89px;width:37px;height:15px"><div class="h" style="height:11px;line-height:11px">Ringm</div></div><div class="c" style="left:1034px;top:89px;width:36px;height:15px"><div class="h" style="height:11px;line-height:11px">Ringm</div></div><div class="c" style="left:1070px;top:89px;width:36px;height:15px"><div class="h" style="height:11px;line-height:11px">Ringm</div></div>
<div class="c" style="left:1125px;top:89px;width:18px;height:15px"><div class="h" style="height:11px;line-height:11px">Ri</div></div><div class="c" style="left:1143px;top:89px;width:36px;height:15px"><div class="h" style="height:11px;line-height:11px">Ringm</div></div><div class="c" style="left:1179px;top:89px;width:37px;height:15px"><div class="h" style="height:11px;line-height:11px">Ringm</div></div><div class="c" style="left:1216px;top:89px;width:36px;height:15px"><div class="h" style="height:11px;line-height:11px">Ringm</div></div><div class="c" style="left:1252px;top:89px;width:36px;height:15px"><div class="h" style="height:11px;line-height:11px">Ringm</div></div><div class="c" style="left:1288px;top:89px;width:36px;height:15px"><div class="h" style="height:11px;line-height:11px">Ringm</div></div><div class="c" style="left:1324px;top:89px;width:36px;height:15px"><div class="h" style="height:11px;line-height:11px">Ringm</div></div><div class="c" style="left:1360px;top:89px;width:27px;height:15px"><div class="h" style="height:11px;line-height:11px">Ring</div></div>

<div class="c" style="left:508px;top:106px;width:36px;height:15px"><div class="h" style="height:11px;line-height:11px">Stutte</div></div><div class="c" style="left:544px;top:106px;width:37px;height:15px"><div class="h" style="height:11px;line-height:11px">Stutter</div></div><div class="c" style="left:581px;top:106px;width:36px;height:15px"><div class="h" style="height:11px;line-height:11px">Stutte</div></div><div class="c" style="left:617px;top:106px;width:36px;height:15px"><div class="h" style="height:11px;line-height:11px">Stutte</div></div>
<div class="c" style="left:671px;top:106px;width:19px;height:15px"><div class="h" style="height:11px;line-height:11px">St</div></div><div class="c" style="left:690px;top:106px;width:36px;height:15px"><div class="h" style="height:11px;line-height:11px">Stutte</div></div><div class="c" style="left:726px;top:106px;width:36px;height:15px"><div class="h" style="height:11px;line-height:11px">Stutter</div></div><div class="c" style="left:762px;top:106px;width:36px;height:15px"><div class="h" style="height:11px;line-height:11px">Stutte</div></div>
<div class="c" style="left:961px;top:106px;width:36px;height:15px"><div class="h" style="height:11px;line-height:11px">Stutte</div></div><div class="c" style="left:997px;top:106px;width:37px;height:15px"><div class="h" style="height:11px;line-height:11px">Stutte</div></div><div class="c" style="left:1034px;top:106px;width:36px;height:15px"><div class="h" style="height:11px;line-height:11px">Stutte</div></div><div class="c" style="left:1070px;top:106px;width:36px;height:15px"><div class="h" style="height:11px;line-height:11px">Stutte</div></div>
<div class="c" style="left:1125px;top:106px;width:18px;height:15px"><div class="h" style="height:11px;line-height:11px">St</div></div><div class="c" style="left:1143px;top:106px;width:36px;height:15px"><div class="h" style="height:11px;line-height:11px">Stutte</div></div><div class="c" style="left:1179px;top:106px;width:37px;height:15px"><div class="h" style="height:11px;line-height:11px">Stutte</div></div><div class="c" style="left:1216px;top:106px;width:36px;height:15px"><div class="h" style="height:11px;line-height:11px">Stutte</div></div><div class="c" style="left:1252px;top:106px;width:36px;height:15px"><div class="h" style="height:11px;line-height:11px">Stutte</div></div><div class="c" style="left:1288px;top:106px;width:36px;height:15px"><div class="h" style="height:11px;line-height:11px">Stutte</div></div><div class="c" style="left:1324px;top:106px;width:36px;height:15px"><div class="h" style="height:11px;line-height:11px">Stutte</div></div><div class="c" style="left:1360px;top:106px;width:27px;height:15px"><div class="h" style="height:11px;line-height:11px">Stut</div></div>

<!-- rows 4-6 drum patterns -->
<div class="a k" style="left:508px;top:123px;width:145px;height:16px"></div><div class="a k" style="left:671px;top:123px;width:127px;height:16px"></div><div class="a k" style="left:961px;top:123px;width:145px;height:16px"></div><div class="a k" style="left:1125px;top:123px;width:262px;height:16px"></div>
<div class="a sn" style="left:512px;top:140px;width:141px;height:16px"></div><div class="a sn" style="left:671px;top:140px;width:127px;height:16px"></div><div class="a sn" style="left:961px;top:140px;width:145px;height:16px"></div><div class="a sn" style="left:1125px;top:140px;width:262px;height:16px"></div>
<div class="a k" style="left:510px;top:157px;width:143px;height:16px"></div><div class="a k" style="left:671px;top:157px;width:127px;height:16px"></div><div class="a k" style="left:961px;top:157px;width:145px;height:16px"></div><div class="a k" style="left:1125px;top:157px;width:262px;height:16px"></div>
<!-- row7 foley -->
<div class="fb" style="left:528px;top:175px;height:15px"></div><div class="fb" style="left:549px;top:175px;height:15px"></div><div class="fb" style="left:576px;top:175px;height:15px"></div><div class="fb" style="left:600px;top:175px;height:15px"></div><div class="fb" style="left:621px;top:175px;height:15px"></div><div class="fb" style="left:648px;top:175px;height:15px"></div>
<div class="fb" style="left:673px;top:175px;height:15px"></div><div class="fb" style="left:694px;top:175px;height:15px"></div><div class="fb" style="left:721px;top:175px;height:15px"></div><div class="fb" style="left:745px;top:175px;height:15px"></div><div class="fb" style="left:766px;top:175px;height:15px"></div><div class="fb" style="left:793px;top:175px;height:15px"></div>
<div class="fb" style="left:966px;top:175px;height:15px"></div><div class="fb" style="left:987px;top:175px;height:15px"></div><div class="fb" style="left:1014px;top:175px;height:15px"></div><div class="fb" style="left:1038px;top:175px;height:15px"></div><div class="fb" style="left:1059px;top:175px;height:15px"></div><div class="fb" style="left:1086px;top:175px;height:15px"></div>
<div class="fb" style="left:1128px;top:175px;height:15px"></div><div class="fb" style="left:1150px;top:175px;height:15px"></div><div class="fb" style="left:1176px;top:175px;height:15px"></div><div class="fb" style="left:1200px;top:175px;height:15px"></div><div class="fb" style="left:1222px;top:175px;height:15px"></div><div class="fb" style="left:1248px;top:175px;height:15px"></div><div class="fb" style="left:1272px;top:175px;height:15px"></div><div class="fb" style="left:1294px;top:175px;height:15px"></div><div class="fb" style="left:1320px;top:175px;height:15px"></div><div class="fb" style="left:1345px;top:175px;height:15px"></div><div class="fb" style="left:1366px;top:175px;height:15px"></div><div class="fb" style="left:1382px;top:175px;height:15px"></div>

<!-- row8 Fx Background -->
<div class="c" style="left:508px;top:192px;width:73px;height:24px"><div class="h">Fx Backgrou</div></div><div class="c" style="left:581px;top:192px;width:72px;height:24px"><div class="h">Fx Backgrou</div></div>
<div class="c" style="left:671px;top:192px;width:55px;height:24px"><div class="h">Fx Backg</div></div><div class="c" style="left:726px;top:192px;width:72px;height:24px"><div class="h">Fx Backgrou</div></div>
<div class="c" style="left:961px;top:192px;width:73px;height:24px"><div class="h">Fx Backgrou</div></div><div class="c" style="left:1034px;top:192px;width:72px;height:24px"><div class="h">Fx Backgrou</div></div>
<div class="c" style="left:1125px;top:192px;width:53px;height:24px"><div class="h">Fx Backg</div></div><div class="c" style="left:1178px;top:192px;width:72px;height:24px"><div class="h">Fx Backgrou</div></div><div class="c" style="left:1250px;top:192px;width:73px;height:24px"><div class="h">Fx Backgrou</div></div><div class="c" style="left:1323px;top:192px;width:73px;height:24px"><div class="h">Fx Backgrou</div></div>

<!-- row9 hihat bars -->
<div class="fb" style="left:524px;top:219px;height:36px;width:6px"></div><div class="fb" style="left:561px;top:219px;height:36px;width:6px"></div><div class="fb" style="left:597px;top:219px;height:36px;width:6px"></div><div class="fb" style="left:633px;top:219px;height:36px;width:6px"></div>
<div class="fb" style="left:671px;top:219px;height:36px;width:6px"></div><div class="fb" style="left:706px;top:219px;height:36px;width:6px"></div><div class="fb" style="left:742px;top:219px;height:36px;width:6px"></div><div class="fb" style="left:779px;top:219px;height:36px;width:6px"></div>
<div class="fb" style="left:977px;top:219px;height:36px;width:6px"></div><div class="fb" style="left:1014px;top:219px;height:36px;width:6px"></div><div class="fb" style="left:1050px;top:219px;height:36px;width:6px"></div><div class="fb" style="left:1086px;top:219px;height:36px;width:6px"></div>
<div class="fb" style="left:1125px;top:219px;height:36px;width:6px"></div><div class="fb" style="left:1160px;top:219px;height:36px;width:6px"></div><div class="fb" style="left:1196px;top:219px;height:36px;width:6px"></div><div class="fb" style="left:1232px;top:219px;height:36px;width:6px"></div><div class="fb" style="left:1268px;top:219px;height:36px;width:6px"></div><div class="fb" style="left:1305px;top:219px;height:36px;width:6px"></div><div class="fb" style="left:1341px;top:219px;height:36px;width:6px"></div><div class="fb" style="left:1377px;top:219px;height:36px;width:6px"></div>

<!-- row10 Lead -->
<div class="c" style="left:653px;top:257px;width:145px;height:64px"><div class="h hh" style="height:12px;line-height:12px"><span>TruePianos : Lead</span></div><div class="ml" style="left:18px;top:30px;width:18px"></div><div class="ml" style="left:18px;top:34px;width:18px"></div><div class="ml" style="left:36px;top:36px;width:36px"></div><div class="ml" style="left:54px;top:39px;width:36px"></div><div class="ml" style="left:90px;top:31px;width:18px"></div><div class="ml" style="left:90px;top:36px;width:36px"></div><div class="ml" style="left:72px;top:34px;width:18px"></div><div class="ml" style="left:108px;top:40px;width:36px"></div></div>
<div class="c" style="left:1106px;top:257px;width:144px;height:64px"><div class="h hh" style="height:12px;line-height:12px"><span>TruePianos : Piano</span></div><div class="ml" style="left:18px;top:30px;width:18px"></div><div class="ml" style="left:18px;top:34px;width:18px"></div><div class="ml" style="left:36px;top:36px;width:36px"></div><div class="ml" style="left:54px;top:39px;width:36px"></div><div class="ml" style="left:90px;top:31px;width:18px"></div><div class="ml" style="left:90px;top:36px;width:36px"></div><div class="ml" style="left:72px;top:34px;width:18px"></div><div class="ml" style="left:108px;top:40px;width:36px"></div></div>
<div class="c" style="left:1250px;top:257px;width:73px;height:64px"><div class="h" style="height:12px;line-height:12px">TruePianos</div><div class="ml" style="left:0;top:34px;width:36px"></div><div class="ml" style="left:36px;top:39px;width:36px"></div><div class="ml" style="left:18px;top:30px;width:18px"></div></div>
<div class="c" style="left:1323px;top:257px;width:73px;height:64px"><div class="h" style="height:12px;line-height:12px">TruePianos</div><div class="ml" style="left:0;top:34px;width:36px"></div><div class="ml" style="left:36px;top:39px;width:36px"></div><div class="ml" style="left:18px;top:30px;width:18px"></div></div>

<!-- row11 Vocal -->
<div class="c" style="left:363px;top:323px;width:104px;height:45px"><div class="h">91V_UKG_135_vo</div><div class="wv" style="top:14px;height:3px"></div><div class="wv" style="top:27px"></div></div>
<div class="c" style="left:468px;top:323px;width:32px;height:45px"><div class="h">91V</div><div class="wv" style="top:27px"></div></div>
<div class="c" style="left:508px;top:323px;width:145px;height:45px"><div class="h">91V_UKG_135_vocal_ho</div><div class="wv" style="top:14px;height:3px"></div><div class="wv" style="top:27px"></div></div>
<div class="c" style="left:816px;top:323px;width:30px;height:45px"><div class="h">91V</div><div class="wv" style="top:27px"></div></div>
<div class="c" style="left:847px;top:323px;width:28px;height:45px"><div class="h">91V</div><div class="wv" style="top:27px"></div></div>
<div class="c" style="left:876px;top:323px;width:42px;height:45px"><div class="h">91V_</div><div class="wv" style="top:27px"></div></div>
<div class="c" style="left:920px;top:323px;width:19px;height:45px"><div class="h">91</div><div class="wv" style="top:27px"></div></div>
<div class="c" style="left:940px;top:323px;width:18px;height:45px"><div class="h">9</div><div class="wv" style="top:27px"></div></div>
<div class="c" style="left:961px;top:323px;width:145px;height:45px"><div class="h">91V_UKG_135_vocal_</div><div class="wv" style="top:14px;height:3px"></div><div class="wv" style="top:27px"></div></div>
<div class="wb" style="left:1171px;top:323px;width:6px;height:45px"></div><div class="wb" style="left:1243px;top:323px;width:6px;height:45px"></div><div class="wb" style="left:1283px;top:323px;width:4px;height:45px"></div><div class="wb" style="left:1316px;top:323px;width:6px;height:45px"></div><div class="wb" style="left:1360px;top:323px;width:4px;height:45px"></div>
<div class="c" style="left:1388px;top:323px;width:152px;height:45px"><div class="h" style="padding-left:12px">91V_UKG_135_vocal_ho</div><div class="ml" style="left:12px;top:15px;width:130px;background:#666"></div><div class="ml" style="left:6px;top:28px;width:140px;height:1px;background:#aaa"></div></div>
<!-- row12 -->
<div class="c" style="left:798px;top:370px;width:18px;height:14px;background:#9b9b9b"><div class="h" style="background:none">M</div></div>

<!-- row13 Arp -->
<div class="c" style="left:291px;top:386px;width:71px;height:69px"><div class="h hh"><span>Arp</span></div><div class="dots" style="top:20px;height:22px"></div></div>
<div class="c" style="left:362px;top:386px;width:146px;height:69px"><div class="h hh"><span>Arp</span></div><div class="dots" style="top:20px;height:22px"></div></div>
<div class="c" style="left:816px;top:386px;width:145px;height:69px"><div class="h hh"><span>Arp</span></div><div class="dots" style="top:20px;height:22px"></div></div>
<div class="c" style="left:1396px;top:386px;width:145px;height:69px"><div class="h hh"><span>Arp</span></div><div class="dots" style="top:20px;height:22px"></div></div>

<!-- row14 Strings Sustain -->
<div class="c" style="left:1106px;top:457px;width:290px;height:34px"><div class="h hh"><span>Strings Sustain</span></div><div class="ml" style="left:0;top:12px;width:282px;height:1px;background:#333"></div></div>
<!-- row15 LABS -->
<div class="c" style="left:1250px;top:493px;width:146px;height:63px"><div class="h hh"><span>LABS</span></div><div class="ml" style="left:0;top:29px;width:136px"></div><div class="ml" style="left:0;top:33px;width:136px"></div></div>
<!-- row16 Cowbell -->
<div class="c" style="left:653px;top:558px;width:73px;height:63px"><div class="h hh"><span>Cowbell</span></div><div class="ml" style="left:0;top:30px;width:70px;height:1px;background:#333"></div></div>
<div class="c" style="left:726px;top:558px;width:72px;height:63px"><div class="h hh"><span>Cowbell</span></div><div class="ml" style="left:0;top:28px;width:70px;height:1px;background:#333"></div><div class="ml" style="left:0;top:31px;width:70px;height:1px;background:#333"></div></div>
<div class="c" style="left:1106px;top:558px;width:72px;height:63px"><div class="h hh"><span>Cowbell</span></div><div class="ml" style="left:0;top:30px;width:70px;height:1px;background:#333"></div></div>
<div class="c" style="left:1178px;top:558px;width:72px;height:63px"><div class="h hh"><span>Cowbell</span></div><div class="ml" style="left:0;top:28px;width:70px;height:1px;background:#333"></div><div class="ml" style="left:0;top:31px;width:70px;height:1px;background:#333"></div></div>
<div class="c" style="left:1250px;top:558px;width:73px;height:63px"><div class="h hh"><span>Cowbell</span></div><div class="ml" style="left:0;top:30px;width:70px;height:1px;background:#333"></div></div>
<div class="c" style="left:1323px;top:558px;width:73px;height:63px"><div class="h hh"><span>Cowbell</span></div><div class="ml" style="left:0;top:28px;width:70px;height:1px;background:#333"></div><div class="ml" style="left:0;top:31px;width:70px;height:1px;background:#333"></div></div>
<!-- row17 LDS -->
<div class="c" style="left:653px;top:623px;width:38px;height:54px;background:#f0f0f0"><div class="h">LDS_</div><div class="wv" style="top:34px;height:4px"></div><div class="a" style="left:0;top:40px;width:20px;height:14px;background:#9b9b9b;color:#fff;font-size:10px;padding-left:3px">☼</div><svg class="a" style="left:0;top:0" width="38" height="54"><path d="M14 0L37 54" stroke="#333" stroke-width="1"/></svg></div>
<div class="c" style="left:1106px;top:623px;width:39px;height:54px;background:#f0f0f0"><div class="h">LDS_</div><div class="wv" style="top:34px;height:4px"></div><div class="a" style="left:0;top:40px;width:20px;height:14px;background:#9b9b9b;color:#fff;font-size:10px;padding-left:3px">☼</div><svg class="a" style="left:0;top:0" width="39" height="54"><path d="M14 0L38 54" stroke="#333" stroke-width="1"/></svg></div>
<!-- row18 Sweep -->
<div class="c" style="left:1250px;top:678px;width:146px;height:30px"><div class="h" style="height:14px;line-height:14px">Long_Sweep_Up_Drastic_</div><div class="a" style="left:0;top:14px;width:22px;height:16px;background:#9b9b9b;color:#fff;font-size:10px;padding:2px 0 0 5px;clip-path:polygon(0 0,80% 0,100% 100%,0 100%)">☼</div><div class="a" style="left:40px;top:20px;width:104px;height:4px;background:#666"></div></div>
<!-- row19 -->
<div class="wb" style="left:841px;top:710px;width:6px;height:17px"></div><div class="wb" style="left:875px;top:710px;width:6px;height:17px"></div>
<div class="c" style="left:1396px;top:709px;width:145px;height:19px"><div class="h hh" style="height:11px;line-height:11px"><span>Mixdown(2)</span></div><div class="ml" style="left:50px;top:2px;width:94px;height:1px;background:#556"></div></div>
<!-- row20 Intro bass -->
<div class="c" style="left:291px;top:728px;width:71px;height:51px"><div class="h hh"><span>Intro Bass</span></div><div class="ml" style="left:2px;top:34px;width:66px;height:1px;background:#333"></div><div class="ml" style="left:10px;top:37px;width:50px;height:1px;background:#333"></div></div>
<div class="c" style="left:362px;top:728px;width:146px;height:51px"><div class="h hh"><span>Intro Bass</span></div><div class="ml" style="left:2px;top:34px;width:140px;height:1px;background:#333"></div><div class="ml" style="left:10px;top:37px;width:120px;height:1px;background:#333"></div></div>
<div class="c" style="left:816px;top:728px;width:145px;height:51px"><div class="h hh"><span>Intro Bass</span></div><div class="ml" style="left:2px;top:34px;width:140px;height:1px;background:#333"></div><div class="ml" style="left:10px;top:37px;width:120px;height:1px;background:#333"></div></div>

<!-- rows 21-28 -->
<div class="wb" style="left:508px;top:782px;width:71px;height:9px"></div><div class="wb" style="left:581px;top:782px;width:68px;height:9px"></div><div class="wb" style="left:671px;top:782px;width:49px;height:9px"></div><div class="wb" style="left:724px;top:782px;width:71px;height:9px"></div><div class="wb" style="left:961px;top:782px;width:68px;height:9px"></div><div class="wb" style="left:1034px;top:782px;width:68px;height:9px"></div><div class="wb" style="left:1125px;top:782px;width:51px;height:9px"></div><div class="wb" style="left:1178px;top:782px;width:70px;height:9px"></div><div class="wb" style="left:1250px;top:782px;width:68px;height:9px"></div><div class="wb" style="left:1323px;top:782px;width:64px;height:9px"></div>
<div class="wb" style="left:577px;top:793px;width:3px;height:9px"></div><div class="wb" style="left:649px;top:793px;width:3px;height:9px"></div><div class="wb" style="left:721px;top:793px;width:3px;height:9px"></div><div class="wb" style="left:794px;top:793px;width:3px;height:9px"></div><div class="wb" style="left:1030px;top:793px;width:3px;height:9px"></div><div class="wb" style="left:1103px;top:793px;width:3px;height:9px"></div><div class="wb" style="left:1175px;top:793px;width:3px;height:9px"></div><div class="wb" style="left:1247px;top:793px;width:3px;height:9px"></div><div class="wb" style="left:1320px;top:793px;width:3px;height:9px"></div>
<div class="wb" style="left:508px;top:804px;width:145px;height:9px"></div><div class="wb" style="left:671px;top:804px;width:127px;height:9px"></div>
<div class="wb" style="left:961px;top:815px;width:435px;height:9px"></div>
<div class="wb" style="left:362px;top:826px;width:146px;height:10px"></div><div class="wb" style="left:816px;top:826px;width:145px;height:10px"></div>
<div class="wb" style="left:1537px;top:838px;width:8px;height:9px"></div>
<div class="wb" style="left:358px;top:849px;width:3px;height:9px"></div>
<div class="wb" style="left:816px;top:860px;width:145px;height:6px"></div><div class="wb" style="left:1396px;top:860px;width:145px;height:6px"></div>

</div></body></html>
